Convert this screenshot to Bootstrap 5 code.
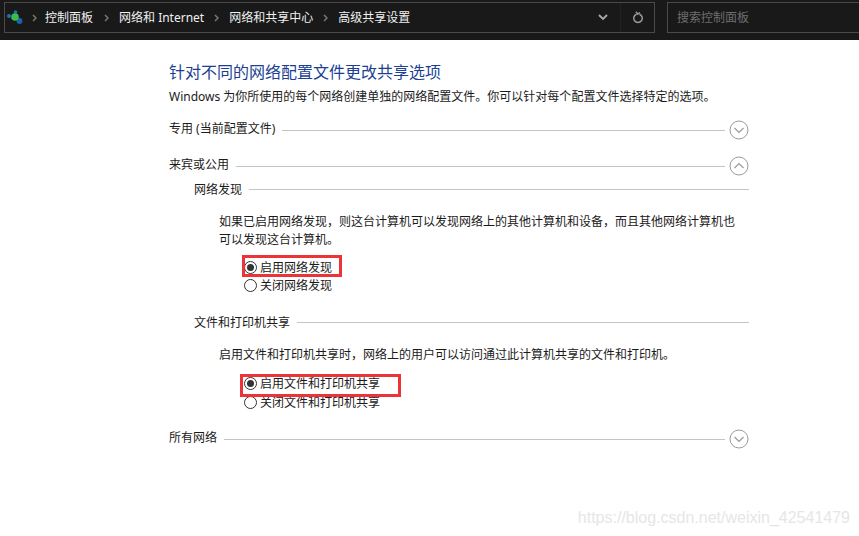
<!DOCTYPE html>
<html lang="zh">
<head>
  <meta charset="UTF-8">
  <title>高级共享设置</title>
  <link href="https://cdn.jsdelivr.net/npm/bootstrap@5.3.0/dist/css/bootstrap.min.css" rel="stylesheet">
  <style>
    html, body { height: 100%; overflow: hidden; }
    body { font-family: "Noto Sans", "Noto Sans CJK SC", sans-serif; font-size: 12px; line-height: 18px; color: #1a1a1a; background: #fff; position: relative; }
    .top-strip { height: 40px; background: #191919; padding: 2px 0 0 4px; gap: 12px; }
    .addr-box { width: 651px; height: 31px; border: 1px solid #4a4a4a; color: #f0f0f0; }
    .crumb-logo { margin-left: 2px; flex: none; }
    .crumb-sep { width: 25px; flex: none; }
    .crumb-sep.first-sep { width: 22px; }
    .crumb-sep.wide-sep { width: 26px; }
    .crumb-end { width: 34px; height: 29px; }
    .crumb-end + .crumb-end { border-left: 1px solid #222; }
    .search-box { flex: 1; height: 31px; border: 1px solid #4a4a4a; border-right: 0; color: #6e6e6e; padding-left: 9px; }
    .page-body { padding: 23px 110px 0 169px; }
    .page-title { font-size: 16px; line-height: 18px; color: #1c3f94; font-weight: 400; margin: 0 0 7px; }
    .sect-row { height: 24px; margin-top: 12px; }
    .sect-row.last-sect { margin-top: 15px; }
    .sect-row .rule, .group-row .rule { flex: 1; height: 1px; background: #c4c4c4; margin-left: 7px; }
    .sect-row .rule { margin-right: -2px; }
    .group-row .rule { margin-top: -2px; }
    .sect-label { margin-top: -2px; }
    .round-btn { width: 20px; height: 20px; margin-left: 6px; flex: none; }
    .group-row { height: 18px; margin-left: 25px; margin-top: 3px; }
    .group-row.second-group { margin-top: 19px; }
    .group-text { margin: 14px 14px 0 50px; }
    .radio-list { margin: 10px 0 0 75px; }
    .radio-list.second-list { margin-top: 11px; }
    .radio-line { height: 18px; }
    .second-list .radio-line + .radio-line { height: 19px; padding-top: 1px; }
    .radio-dot { width: 13px; height: 13px; border: 1px solid #333; border-radius: 50%; margin: 2px 3px 0 0; flex: none; background: #fff; }
    .radio-dot.on::after { content: ""; display: block; width: 7px; height: 7px; margin: 2px; border-radius: 50%; background: #333; }
    .red-mark { position: absolute; border: 3px solid #ee3338; }
    .mark-one { left: 242px; top: 255px; width: 100px; height: 22px; }
    .mark-two { left: 240px; top: 374px; width: 161px; height: 23px; }
    .watermark { position: absolute; right: 9px; top: 508px; font-family: "Liberation Sans", sans-serif; font-size: 16px; line-height: 20px; color: #e6e6e6; }
  </style>
</head>
<body>
  <div class="top-strip d-flex">
    <div class="addr-box d-flex align-items-center">
      <svg class="crumb-logo" width="16" height="15" viewBox="0 0 16 15"><circle cx="2" cy="6" r="2" fill="#1f6fc0"/><circle cx="8.500" cy="2" r="1.800" fill="#1f6fc0"/><circle cx="12.500" cy="11" r="2.900" fill="#1565b0"/><circle cx="8" cy="7" r="3.800" fill="#3dbb4a"/></svg>
      <span class="crumb-sep first-sep d-flex justify-content-center"><svg width="5" height="8" viewBox="0 0 5 8"><path d="M1 1l3 3-3 3" fill="none" stroke="#777" stroke-width="1.500"/></svg></span>
      <span>控制面板</span>
      <span class="crumb-sep wide-sep d-flex justify-content-center"><svg width="5" height="8" viewBox="0 0 5 8"><path d="M1 1l3 3-3 3" fill="none" stroke="#777" stroke-width="1.500"/></svg></span>
      <span>网络和 Internet</span>
      <span class="crumb-sep d-flex justify-content-center"><svg width="5" height="8" viewBox="0 0 5 8"><path d="M1 1l3 3-3 3" fill="none" stroke="#777" stroke-width="1.500"/></svg></span>
      <span>网络和共享中心</span>
      <span class="crumb-sep d-flex justify-content-center"><svg width="5" height="8" viewBox="0 0 5 8"><path d="M1 1l3 3-3 3" fill="none" stroke="#777" stroke-width="1.500"/></svg></span>
      <span>高级共享设置</span>
      <div class="crumb-end ms-auto d-flex align-items-center justify-content-center">
        <svg width="10" height="7" viewBox="0 0 10 7"><path d="M1 1l4 4 4-4" fill="none" stroke="#aaa" stroke-width="1.800"/></svg>
      </div>
      <div class="crumb-end d-flex align-items-center justify-content-center">
        <svg width="12" height="13" viewBox="0 0 12 13"><path d="M4.500 3.200a4.300 4.300 0 1 0 3 0M4 .8l1.800 2.400L8 1.500" fill="none" stroke="#999" stroke-width="1.500"/></svg>
      </div>
    </div>
    <div class="search-box d-flex align-items-center">搜索控制面板</div>
  </div>

  <div class="page-body">
    <h1 class="page-title">针对不同的网络配置文件更改共享选项</h1>
    <div>Windows 为你所使用的每个网络创建单独的网络配置文件。你可以针对每个配置文件选择特定的选项。</div>

    <div class="sect-row d-flex align-items-center">
      <span class="sect-label">专用 (当前配置文件)</span><span class="rule"></span>
      <svg class="round-btn" viewBox="0 0 20 20"><circle cx="10" cy="10" r="9" fill="none" stroke="#9a9a9a"/><path d="M5.500 8l4.500 4.500L14.500 8" fill="none" stroke="#9a9a9a" stroke-width="1.200"/></svg>
    </div>
    <div class="sect-row d-flex align-items-center">
      <span class="sect-label">来宾或公用</span><span class="rule"></span>
      <svg class="round-btn" viewBox="0 0 20 20"><circle cx="10" cy="10" r="9" fill="none" stroke="#9a9a9a"/><path d="M5.500 12L10 7.500 14.500 12" fill="none" stroke="#9a9a9a" stroke-width="1.200"/></svg>
    </div>

    <div class="group-row d-flex align-items-center"><span>网络发现</span><span class="rule"></span></div>
    <div class="group-text">如果已启用网络发现，则这台计算机可以发现网络上的其他计算机和设备，而且其他网络计算机也可以发现这台计算机。</div>
    <div class="radio-list">
      <div class="radio-line d-flex"><span class="radio-dot on"></span>启用网络发现</div>
      <div class="radio-line d-flex"><span class="radio-dot"></span>关闭网络发现</div>
    </div>

    <div class="group-row second-group d-flex align-items-center"><span>文件和打印机共享</span><span class="rule"></span></div>
    <div class="group-text">启用文件和打印机共享时，网络上的用户可以访问通过此计算机共享的文件和打印机。</div>
    <div class="radio-list second-list">
      <div class="radio-line d-flex"><span class="radio-dot on"></span>启用文件和打印机共享</div>
      <div class="radio-line d-flex"><span class="radio-dot"></span>关闭文件和打印机共享</div>
    </div>

    <div class="sect-row last-sect d-flex align-items-center">
      <span class="sect-label">所有网络</span><span class="rule"></span>
      <svg class="round-btn" viewBox="0 0 20 20"><circle cx="10" cy="10" r="9" fill="none" stroke="#9a9a9a"/><path d="M5.500 8l4.500 4.500L14.500 8" fill="none" stroke="#9a9a9a" stroke-width="1.200"/></svg>
    </div>
  </div>

  <div class="red-mark mark-one"></div>
  <div class="red-mark mark-two"></div>
  <div class="watermark">https://blog.csdn.net/weixin_42541479</div>
</body>
</html>
